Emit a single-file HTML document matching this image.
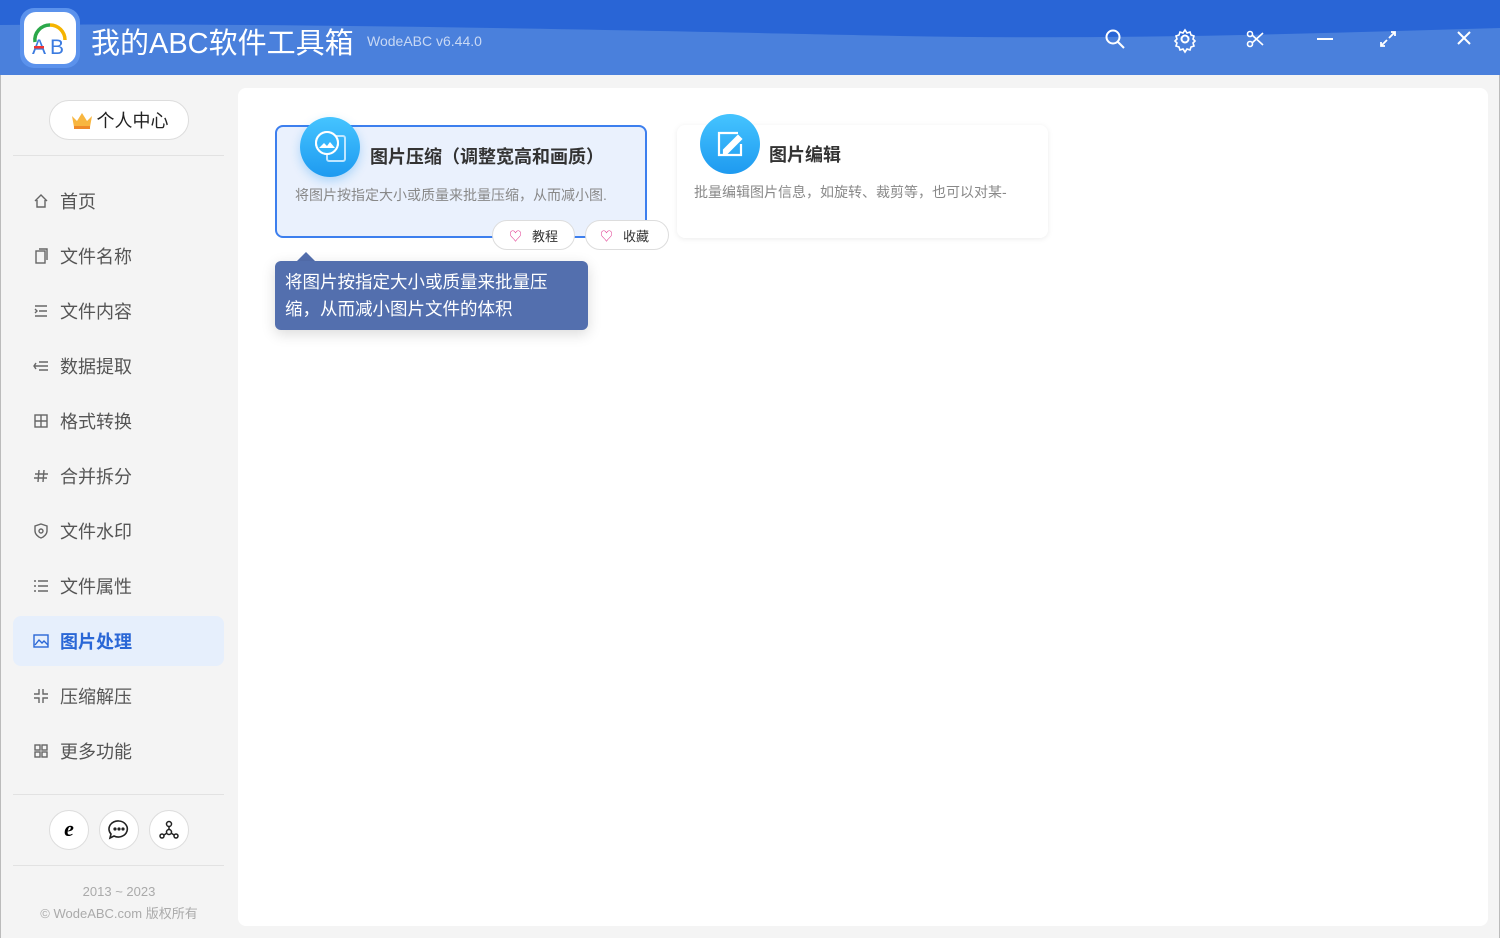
<!DOCTYPE html><html><head><meta charset="utf-8"><style>
*{margin:0;padding:0;box-sizing:border-box}
body{width:1500px;height:938px;overflow:hidden;background:#f4f4f4;font-family:"Liberation Sans","Noto Sans CJK SC",sans-serif;position:relative}
.hdr{position:absolute;left:0;top:0;width:1500px;height:75px;background:#4a80dc;overflow:hidden}
.abs{position:absolute}
.nav{position:absolute;left:13px;width:211px;height:50px;display:flex;align-items:center;font-size:18px;color:#555}
.nav svg{margin-left:20px;margin-right:11px;fill:none;stroke:#666;stroke-width:1.4}
.circ{position:absolute;width:40px;height:40px;border-radius:50%;background:#fff;border:1px solid #ddd;top:810px}
.pill{position:absolute;top:220px;height:30px;border-radius:15px;background:#fff;border:1px solid #ddd;font-size:13px;color:#333;display:flex;align-items:center}
</style></head><body>
<div class="hdr">
<svg class="abs" style="left:0;top:0" width="1500" height="75"><path d="M0 0H1500V28C1300 34 1100 40 900 36S300 22 0 25Z" fill="#2965d6"/></svg>
<div class="abs" style="left:20px;top:8px;width:60px;height:60px;border-radius:14px;background:#5b92ec"></div>
<div class="abs" style="left:24px;top:12px;width:52px;height:52px;border-radius:12px;background:#fff"></div>
<svg class="abs" style="left:24px;top:12px" width="52" height="52"><path d="M11 30A15 15 0 0 1 26 13" stroke="#2ba84a" stroke-width="3.5" fill="none"/><path d="M26 13A15 15 0 0 1 41 28" stroke="#f5b400" stroke-width="3.5" fill="none"/><text x="8" y="42" font-size="21" fill="#3b7be0" font-family="Liberation Sans">A</text><text x="26" y="42" font-size="21" fill="#3b7be0" font-family="Liberation Sans">B</text><rect x="10" y="34" width="10" height="2.5" fill="#e33"/></svg>
<div class="abs" style="left:91px;top:20px;font-size:29px;color:#fff">我的ABC软件工具箱</div>
<div class="abs" style="left:367px;top:33px;font-size:14px;color:#c8d8f4">WodeABC v6.44.0</div>
<svg class="abs" style="left:1100px;top:25px" width="380" height="30" fill="none" stroke="#fff" stroke-width="2">
<circle cx="13" cy="12" r="6.5"/><path d="M18 17l6 6"/>
<circle cx="85" cy="14" r="3.5"/><path d="M85 5l2 3 3-1 1 3 3 1-1 3 2 2-2 2 1 3-3 1-1 3-3-1-2 3-2-3-3 1-1-3-3-1 1-3-2-2 2-2-1-3 3-1 1-3 3 1z" stroke-width="1.6"/>
<circle cx="150" cy="9" r="2.5" stroke-width="1.6"/><circle cx="150" cy="19" r="2.5" stroke-width="1.6"/><path d="M152 10l11 10M152 18l11-10" stroke-width="1.6"/>
<path d="M217 14h16"/>
<path d="M289 13l6-6M291 7h4v4M287 15l-6 6M281 17v4h4" stroke-width="1.8"/>
<path d="M358 7l12 12M370 7l-12 12"/>
</svg>
</div>
<div class="abs" style="left:0;top:75px;width:1px;height:863px;background:#bbb"></div>
<div class="abs" style="left:1499px;top:75px;width:1px;height:863px;background:#bbb"></div>
<div class="abs" style="left:49px;top:100px;width:140px;height:40px;border-radius:20px;background:#fff;border:1px solid #ddd;font-size:18px;color:#222;display:flex;align-items:center;justify-content:center"><svg width="24" height="20" style="margin-right:3px"><path d="M2 6l5 5 5-8 5 8 5-5-2 11H4z" fill="#f8b640"/><rect x="4" y="16" width="16" height="3" fill="#ef8a2a"/></svg>个人中心</div>
<div class="abs" style="left:13px;top:155px;width:211px;height:1px;background:#e2e2e2"></div>
<div class="nav" style="top:176px"><svg width="16" height="16"><path d="M2 8L8 2l6 6M4 7v7h8V7"/></svg>首页</div>
<div class="nav" style="top:231px"><svg width="16" height="16"><rect x="3" y="3" width="9" height="12"/><path d="M6 1h8v11"/></svg>文件名称</div>
<div class="nav" style="top:286px"><svg width="16" height="16"><path d="M2 3h12M6 8h8M2 13h12M2 6l2 2-2 2"/></svg>文件内容</div>
<div class="nav" style="top:341px"><svg width="16" height="16"><path d="M6 4h9M1 8h14M6 12h9M3 5l-2 3 2 3"/></svg>数据提取</div>
<div class="nav" style="top:396px"><svg width="16" height="16"><rect x="2" y="2" width="12" height="12"/><path d="M8 2v12M2 8h12"/></svg>格式转换</div>
<div class="nav" style="top:451px"><svg width="16" height="16"><path d="M6 2L5 14M11 2l-1 12M2 6h13M1 10h13"/></svg>合并拆分</div>
<div class="nav" style="top:506px"><svg width="16" height="16"><path d="M8 1l6 2v5c0 3-3 6-6 7-3-1-6-4-6-7V3z"/><circle cx="8" cy="8" r="2"/></svg>文件水印</div>
<div class="nav" style="top:561px"><svg width="16" height="16"><path d="M5 3h10M5 8h10M5 13h10M1 3h2M1 8h2M1 13h2"/></svg>文件属性</div>
<div class="nav" style="top:616px;background:#e6effc;border-radius:8px;color:#2a67d6;font-weight:bold"><svg width="16" height="16" style="stroke:#2a67d6"><rect x="1" y="2" width="14" height="12"/><path d="M2 12l4-5 3 3 2-2 4 4"/></svg>图片处理</div>
<div class="nav" style="top:671px"><svg width="16" height="16"><path d="M6 1v5H1M10 1v5h5M6 15v-5H1M10 15v-5h5"/></svg>压缩解压</div>
<div class="nav" style="top:726px"><svg width="16" height="16"><rect x="2" y="2" width="5" height="5"/><rect x="9" y="2" width="5" height="5"/><rect x="2" y="9" width="5" height="5"/><rect x="9" y="9" width="5" height="5"/></svg>更多功能</div>
<div class="abs" style="left:13px;top:794px;width:211px;height:1px;background:#e2e2e2"></div>
<div class="circ" style="left:49px;font:bold italic 22px 'Liberation Serif';text-align:center;line-height:36px">e</div>
<div class="circ" style="left:99px"><svg width="38" height="38" fill="none" stroke="#222" stroke-width="1.6"><path d="M19 10a9 8 0 1 1-5 15l-4 2 1-4a9 8 0 0 1 8-13z"/><circle cx="15" cy="18" r=".8" fill="#222"/><circle cx="19" cy="18" r=".8" fill="#222"/><circle cx="23" cy="18" r=".8" fill="#222"/></svg></div>
<div class="circ" style="left:149px"><svg width="38" height="38" fill="none" stroke="#222" stroke-width="1.5"><circle cx="19" cy="13" r="2.5"/><circle cx="19" cy="21" r="2.5"/><circle cx="12" cy="25" r="2"/><circle cx="26" cy="25" r="2"/><path d="M19 15.5v3M17 22l-3 2M21 22l3 2"/></svg></div>
<div class="abs" style="left:13px;top:865px;width:211px;height:1px;background:#e2e2e2"></div>
<div class="abs" style="left:0;top:881px;width:238px;text-align:center;font-size:13px;color:#aaa;line-height:22px">2013 ~ 2023<br>© WodeABC.com 版权所有</div>
<div class="abs" style="left:238px;top:88px;width:1250px;height:838px;background:#fff;border-radius:8px"></div>
<div class="abs" style="left:275px;top:125px;width:372px;height:113px;border:2px solid #3d7fee;border-radius:8px;background:#eaf1fd"></div>
<div class="abs" style="left:300px;top:117px;width:60px;height:60px;border-radius:50%;background:linear-gradient(#45c4ff,#1e9af0);box-shadow:0 4px 10px rgba(30,150,240,.3)"></div>
<svg class="abs" style="left:300px;top:117px" width="60" height="60" fill="none" stroke="#fff" stroke-width="2"><rect x="27" y="19" width="18" height="25" rx="2" stroke="#bfe6ff"/><circle cx="27" cy="26" r="11" fill="#35b5fb"/><circle cx="27" cy="26" r="11"/><path d="M19 31l5-5 3 3 3-4 5 6z" fill="#fff" stroke="none"/></svg>
<div class="abs" style="left:370px;top:143px;font-size:18px;font-weight:bold;color:#333">图片压缩（调整宽高和画质）</div>
<div class="abs" style="left:295px;top:185px;font-size:14px;color:#888">将图片按指定大小或质量来批量压缩，从而减小图.</div>
<div class="pill" style="left:492px;width:83px"><span style="color:#e0338c;margin:0 10px 0 16px">♡</span>教程</div>
<div class="pill" style="left:585px;width:84px"><span style="color:#e0338c;margin:0 10px 0 14px">♡</span>收藏</div>
<div class="abs" style="left:677px;top:125px;width:371px;height:113px;border-radius:8px;background:#fff;box-shadow:0 1px 6px rgba(0,0,0,.08)"></div>
<div class="abs" style="left:700px;top:114px;width:60px;height:60px;border-radius:50%;background:linear-gradient(#45c4ff,#1e9af0)"></div>
<svg class="abs" style="left:700px;top:114px" width="60" height="60" fill="none" stroke="#fff" stroke-width="2.2"><path d="M38 19H19v22h22V30"/><path d="M24 36l14-14 3 3-14 14h-3z" fill="#fff"/></svg>
<div class="abs" style="left:769px;top:141px;font-size:18px;font-weight:bold;color:#333">图片编辑</div>
<div class="abs" style="left:694px;top:182px;font-size:14px;color:#888">批量编辑图片信息，如旋转、裁剪等，也可以对某-</div>
<div class="abs" style="left:297px;top:252px;width:0;height:0;border:9px solid transparent;border-bottom-color:#536fae;border-top:0"></div>
<div class="abs" style="left:275px;top:261px;width:313px;height:69px;border-radius:6px;background:#536fae;color:#fff;font-size:17.5px;line-height:27px;padding:8px 10px;box-shadow:0 4px 14px rgba(0,0,0,.15)">将图片按指定大小或质量来批量压缩，从而减小图片文件的体积</div>
</body></html>
